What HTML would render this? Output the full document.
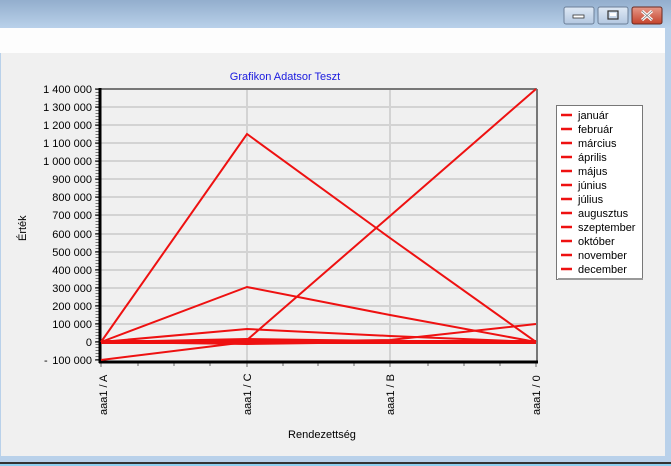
<!DOCTYPE html>
<html><head><meta charset="utf-8"><style>
html,body{margin:0;padding:0;width:671px;height:466px;overflow:hidden;background:#f0f0f0}
text{font-family:"Liberation Sans",sans-serif;font-size:11px;fill:#000}
</style></head><body>
<svg width="671" height="466" xmlns="http://www.w3.org/2000/svg">
<defs><linearGradient id="tb" x1="0" y1="0" x2="0" y2="1"><stop offset="0" stop-color="#93aecd"/><stop offset="1" stop-color="#b9d1ea"/></linearGradient>
<linearGradient id="btn" x1="0" y1="0" x2="0" y2="1"><stop offset="0" stop-color="#dfe9f5"/><stop offset="1" stop-color="#b3c7e0"/></linearGradient>
<linearGradient id="cl" x1="0" y1="0" x2="0" y2="1"><stop offset="0" stop-color="#e69a8a"/><stop offset="1" stop-color="#c4422b"/></linearGradient></defs>
<rect x="0" y="0" width="671" height="466" fill="#b9d1ea"/>
<rect x="0" y="0" width="671" height="28" fill="url(#tb)"/>
<rect x="0" y="28" width="665" height="25" fill="#fdfdfd"/>
<rect x="1" y="53" width="664" height="403" fill="#f0f0f0"/>
<rect x="0" y="462" width="671" height="2" fill="#333"/>
<rect x="0" y="464" width="671" height="2" fill="#8fd0f0"/>
<rect x="564" y="7" width="30" height="17" rx="2" fill="url(#btn)" stroke="#6c7f98"/>
<rect x="573" y="15" width="11" height="3" fill="#fff" stroke="#333" stroke-width="0.8"/>
<rect x="598" y="7" width="30" height="17" rx="2" fill="url(#btn)" stroke="#6c7f98"/>
<rect x="608" y="11" width="10" height="8" fill="none" stroke="#333" stroke-width="1.2"/>
<rect x="610" y="13" width="6" height="3" fill="#fff"/>
<rect x="632" y="7" width="30" height="17" rx="2" fill="url(#cl)" stroke="#6a2a20"/>
<path d="M642 11l10 9M652 11l-10 9" stroke="#fff" stroke-width="3"/>
<path d="M642 11l10 9M652 11l-10 9" stroke="#666" stroke-width="0.6" fill="none"/>
<text x="285" y="80" text-anchor="middle" style="fill:#1a1adf">Grafikon Adatsor Teszt</text>
<g stroke="#d3d3d3" stroke-width="2">
<line x1="101" y1="107" x2="537" y2="107"/><line x1="101" y1="125" x2="537" y2="125"/><line x1="101" y1="143" x2="537" y2="143"/><line x1="101" y1="161" x2="537" y2="161"/><line x1="101" y1="179" x2="537" y2="179"/><line x1="101" y1="197" x2="537" y2="197"/><line x1="101" y1="215" x2="537" y2="215"/><line x1="101" y1="234" x2="537" y2="234"/><line x1="101" y1="252" x2="537" y2="252"/><line x1="101" y1="270" x2="537" y2="270"/><line x1="101" y1="288" x2="537" y2="288"/><line x1="101" y1="306" x2="537" y2="306"/><line x1="101" y1="324" x2="537" y2="324"/><line x1="101" y1="342" x2="537" y2="342"/>
<line x1="247" y1="89" x2="247" y2="361"/><line x1="390" y1="89" x2="390" y2="361"/>
</g>
<line x1="101" y1="89" x2="537" y2="89" stroke="#777" stroke-width="2"/>
<line x1="537" y1="89" x2="537" y2="361" stroke="#777" stroke-width="2"/>
<g text-anchor="end">
<text x="92" y="93">1 400 000</text><text x="92" y="111">1 300 000</text><text x="92" y="129">1 200 000</text><text x="92" y="147">1 100 000</text><text x="92" y="165">1 000 000</text><text x="92" y="183">900 000</text><text x="92" y="201">800 000</text><text x="92" y="219">700 000</text><text x="92" y="238">600 000</text><text x="92" y="256">500 000</text><text x="92" y="274">400 000</text><text x="92" y="292">300 000</text><text x="92" y="310">200 000</text><text x="92" y="328">100 000</text><text x="92" y="346">0</text><text x="92" y="364">100 000</text></g>
<text x="44" y="364">-</text>
<path d="M97 89V361" stroke="#777" stroke-width="3" stroke-dasharray="1 2" fill="none"/>
<g stroke="#000" stroke-width="1">
<line x1="95" y1="89" x2="100" y2="89"/><line x1="95" y1="107" x2="100" y2="107"/><line x1="95" y1="125" x2="100" y2="125"/><line x1="95" y1="143" x2="100" y2="143"/><line x1="95" y1="161" x2="100" y2="161"/><line x1="95" y1="179" x2="100" y2="179"/><line x1="95" y1="197" x2="100" y2="197"/><line x1="95" y1="215" x2="100" y2="215"/><line x1="95" y1="234" x2="100" y2="234"/><line x1="95" y1="252" x2="100" y2="252"/><line x1="95" y1="270" x2="100" y2="270"/><line x1="95" y1="288" x2="100" y2="288"/><line x1="95" y1="306" x2="100" y2="306"/><line x1="95" y1="324" x2="100" y2="324"/><line x1="95" y1="342" x2="100" y2="342"/><line x1="95" y1="360" x2="100" y2="360"/>
</g>
<g stroke="#999" stroke-width="1.5"><line x1="101" y1="362" x2="101" y2="367"/><line x1="138" y1="362" x2="138" y2="366"/><line x1="174" y1="362" x2="174" y2="366"/><line x1="210" y1="362" x2="210" y2="366"/><line x1="247" y1="362" x2="247" y2="367"/><line x1="283" y1="362" x2="283" y2="366"/><line x1="318" y1="362" x2="318" y2="366"/><line x1="354" y1="362" x2="354" y2="366"/><line x1="390" y1="362" x2="390" y2="367"/><line x1="428" y1="362" x2="428" y2="366"/><line x1="464" y1="362" x2="464" y2="366"/><line x1="500" y1="362" x2="500" y2="366"/><line x1="536" y1="362" x2="536" y2="367"/></g>
<line x1="100" y1="88" x2="100" y2="363" stroke="#000" stroke-width="3"/>
<line x1="99" y1="362" x2="538" y2="362" stroke="#000" stroke-width="3"/>
<g stroke="#ee1111" stroke-width="2" fill="none">
<polyline points="101,342 247,134 390,238 536,342"/>
<polyline points="101,342 247,287 390,315 536,342"/>
<polyline points="101,342 247,329 390,336 536,342"/>
<polyline points="101,360 247,342 390,342 536,342"/>
<polyline points="101,342 247,340 390,216 536,89"/>
<polyline points="101,342 247,342 390,340 536,324"/>
<polyline points="101,342 247,339 390,341 536,341"/>
<polyline points="101,342 247,344 390,342 536,343"/>
</g>
<line x1="101" y1="342" x2="536" y2="342" stroke="#ee1111" stroke-width="4"/>
<g><text transform="translate(107,415) rotate(-90)">aaa1 / A</text>
<text transform="translate(251,415) rotate(-90)">aaa1 / C</text>
<text transform="translate(394,415) rotate(-90)">aaa1 / B</text>
<text transform="translate(540,415) rotate(-90)">aaa1 / 0</text></g>
<text x="322" y="438" text-anchor="middle">Rendezettség</text>
<text transform="translate(26,241) rotate(-90)">Érték</text>
<rect x="556.5" y="105.5" width="86" height="174" fill="#fff" stroke="#777"/>
<rect x="558" y="278" width="85" height="2" fill="#999"/>
<g stroke="#ee1111" stroke-width="2.5">
<line x1="561" y1="115" x2="572" y2="115"/><line x1="561" y1="129" x2="572" y2="129"/><line x1="561" y1="143" x2="572" y2="143"/><line x1="561" y1="157" x2="572" y2="157"/><line x1="561" y1="171" x2="572" y2="171"/><line x1="561" y1="185" x2="572" y2="185"/><line x1="561" y1="199" x2="572" y2="199"/><line x1="561" y1="213" x2="572" y2="213"/><line x1="561" y1="227" x2="572" y2="227"/><line x1="561" y1="241" x2="572" y2="241"/><line x1="561" y1="255" x2="572" y2="255"/><line x1="561" y1="269" x2="572" y2="269"/></g>
<g><text x="578" y="119">január</text><text x="578" y="133">február</text><text x="578" y="147">március</text><text x="578" y="161">április</text><text x="578" y="175">május</text><text x="578" y="189">június</text><text x="578" y="203">július</text><text x="578" y="217">augusztus</text><text x="578" y="231">szeptember</text><text x="578" y="245">október</text><text x="578" y="259">november</text><text x="578" y="273">december</text></g>
</svg>
</body></html>
